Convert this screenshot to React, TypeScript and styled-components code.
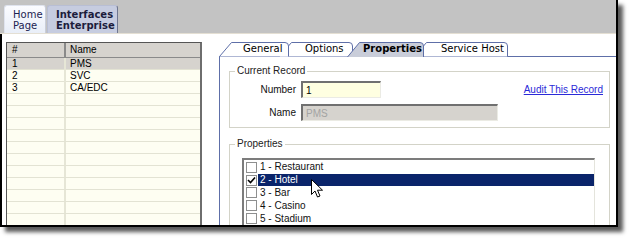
import styled, { createGlobalStyle } from 'styled-components';

const GlobalStyle = createGlobalStyle`
    html, body {
        margin: 0;
        padding: 0;
        background: #ffffff;
        font-family: "Liberation Sans", Arial, sans-serif;
    }
    * {
        box-sizing: border-box;
    }
`;

const Page = styled.div`
    position: relative;
    width: 632px;
    height: 241px;
    overflow: hidden;
`;

const Window = styled.div`
    width: 618px;
    height: 227px;
    display: flex;
    flex-direction: column;
    background: #ffffff;
    border-right: 2px solid #000;
    border-bottom: 2px solid #000;
    box-shadow: 5px 5px 4px rgba(0, 0, 0, 0.65);
    overflow: hidden;
`;

const Header = styled.div`
    height: 34px;
    flex: none;
    display: flex;
    align-items: flex-end;
    padding-left: 4px;
    gap: 1px;
    background: #c3c3c3;
    border-bottom: 1px solid #e4dfd3;
`;

const HeaderTab = styled.div<{ active?: boolean }>`
    height: 28px;
    padding: 0 0 0 8px;
    width: ${p => (p.active ? 71 : 42)}px;
    display: flex;
    flex-direction: column;
    justify-content: center;
    font-family: "DejaVu Sans", Verdana, sans-serif;
    font-size: 10px;
    line-height: 11px;
    font-weight: ${p => (p.active ? 700 : 400)};
    color: ${p => (p.active ? '#1c1c3c' : '#1c2452')};
    background: ${p => (p.active ? '#c6cce0' : 'linear-gradient(#fbfcff, #e9eef8)')};
    border-top: 1px solid ${p => (p.active ? '#b8bed4' : '#dfe3ee')};
    border-left: 1px solid ${p => (p.active ? '#b8bed4' : '#dfe3ee')};
    border-right: 1px solid ${p => (p.active ? '#6f7690' : '#c8cdda')};
    border-radius: 3px 3px 0 0;
`;

const Body = styled.div`
    flex: 1;
    min-height: 0;
    display: flex;
    border-left: 2px solid #000;
    padding: 8px 0 0 4px;
`;

const Grid = styled.div`
    width: 196px;
    flex: none;
    display: flex;
    flex-direction: column;
    background: #fefef2;
    border-left: 1px solid #555;
    border-top: 1px solid #555;
    border-right: 2px solid #6e6e6e;
`;

const GridRow = styled.div<{ head?: boolean; selected?: boolean }>`
    display: grid;
    grid-template-columns: 59px 1fr;
    flex: none;
    height: ${p => (p.head ? 15 : 12)}px;
    font-size: 10px;
    line-height: ${p => (p.head ? 14 : 12)}px;
    color: #000;
    background: ${p => (p.head || p.selected ? '#d6d3ce' : '#fefef2')};
    border-bottom: 1px solid ${p => (p.head ? '#8a8a8a' : '#e3e3d3')};
`;

const GridCell = styled.div<{ first?: boolean; head?: boolean }>`
    padding-left: ${p => (p.first ? 5 : 4)}px;
    white-space: nowrap;
    border-right: ${p => (p.first ? (p.head ? '2px solid #8a8a8a' : '2px solid #e6e6d6') : 'none')};
`;

const Right = styled.div`
    flex: 1;
    min-width: 0;
    margin-left: 17px;
    display: flex;
    flex-direction: column;
`;

const TabStrip = styled.div`
    height: 14px;
    flex: none;
    display: flex;
    position: relative;
    z-index: 2;
`;

const Tab = styled.div<{ w: number; shift: number; pad: number; layer: number; selected?: boolean }>`
    position: relative;
    flex: none;
    width: ${p => p.w}px;
    height: ${p => (p.selected ? 15 : 14)}px;
    margin-left: ${p => p.shift}px;
    padding-left: ${p => p.pad}px;
    z-index: ${p => p.layer};
    font-family: "DejaVu Sans", Tahoma, sans-serif;
    font-size: 10px;
    line-height: 14px;
    font-weight: ${p => (p.selected ? 700 : 400)};
    color: #000;

    svg {
        position: absolute;
        left: 0;
        top: 0;
        z-index: -1;
    }
`;

const TabLabel = styled.span`
    position: relative;
    white-space: nowrap;
`;

const Panel = styled.div`
    flex: 1;
    background: #ffffff;
    border-top: 1px solid #5e6fa8;
    border-left: 1px solid #5e6fa8;
    padding: 8px 6px 0 9px;
`;

const Group = styled.fieldset<{ gapTop?: number }>`
    margin: ${p => p.gapTop ?? 0}px 0 0 0;
    padding: 0;
    border: 1px solid #d3d3c8;
    min-width: 0;
`;

const Legend = styled.legend`
    margin-left: 5px;
    padding: 0 2px;
    font-size: 10px;
    line-height: 12px;
    color: #222;
`;

const FieldRow = styled.div<{ top: number }>`
    display: flex;
    align-items: center;
    height: 17px;
    margin-top: ${p => p.top}px;
`;

const FieldLabel = styled.span`
    width: 66px;
    margin-right: 5px;
    text-align: right;
    font-size: 10px;
    color: #111;
`;

const Input = styled.div<{ w: number; disabled?: boolean }>`
    width: ${p => p.w}px;
    height: 17px;
    padding: 1px 0 0 3px;
    font-size: 10px;
    line-height: 13px;
    color: ${p => (p.disabled ? '#a3a3a3' : '#000')};
    background: ${p => (p.disabled ? '#d6d3ce' : '#ffffe1')};
    border-top: 2px solid #707070;
    border-left: 2px solid #707070;
    border-right: 1px solid #ebebe4;
    border-bottom: 1px solid #ebebe4;
`;

const AuditLink = styled.a`
    margin-left: auto;
    margin-right: 6px;
    font-size: 10px;
    color: #2a2ad8;
    text-decoration: underline;
    cursor: pointer;
`;

const Spacer = styled.div<{ h: number }>`
    height: ${p => p.h}px;
`;

const CheckList = styled.div`
    margin: 8px 14px 0 12px;
    padding-top: 1px;
    height: 80px;
    background: #ffffff;
    border-top: 2px solid #7c7c7c;
    border-left: 2px solid #7c7c7c;
    border-right: 1px solid #e4e4dc;
`;

const CheckItem = styled.div`
    display: flex;
    align-items: center;
    height: 12.8px;
    padding-left: 2px;
    font-size: 10px;
`;

const Box = styled.span`
    width: 11px;
    height: 11px;
    flex: none;
    display: flex;
    align-items: center;
    justify-content: center;
    background: #ffffff;
    border: 1px solid #8e8f8f;
`;

const ItemText = styled.span<{ selected?: boolean }>`
    flex: 1;
    height: 12px;
    margin-left: 1px;
    padding-left: 2px;
    line-height: 12px;
    color: ${p => (p.selected ? '#ffffff' : '#111')};
    background: ${p => (p.selected ? '#0a246a' : 'transparent')};
`;

const Cursor = styled.svg`
    position: absolute;
    left: 311px;
    top: 179px;
`;

const rows = [
    { id: '1', name: 'PMS' },
    { id: '2', name: 'SVC' },
    { id: '3', name: 'CA/EDC' },
];

const tabs = [
    { label: 'General', w: 70, shift: 0, pad: 24, layer: 4 },
    { label: 'Options', w: 74, shift: -10, pad: 26, layer: 3 },
    { label: 'Properties', w: 77, shift: -6, pad: 16, layer: 10, selected: true },
    { label: 'Service Host', w: 94, shift: -10, pad: 27, layer: 1 },
];

const items = ['1 - Restaurant', '2 - Hotel', '3 - Bar', '4 - Casino', '5 - Stadium'];

function TabShape({ w, selected }: { w: number; selected?: boolean }) {
    const h = selected ? 15 : 14.5;
    return (
        <svg width={w} height={15} viewBox={`0 0 ${w} 15`}>
            <path
                d={`M0.5,${h} L12.5,0.5 L${w - 4},0.5 Q${w - 0.5},0.5 ${w - 0.5},4 L${w - 0.5},${h}`}
                fill={selected ? '#c9cdd9' : '#ffffff'}
                stroke="#5e6fa8"
                strokeWidth={1}
            />
        </svg>
    );
}

export default function App() {
    return (
        <Page>
            <GlobalStyle />
            <Window>
                <Header>
                    <HeaderTab>
                        <span>Home</span>
                        <span>Page</span>
                    </HeaderTab>
                    <HeaderTab active>
                        <span>Interfaces</span>
                        <span>Enterprise</span>
                    </HeaderTab>
                </Header>
                <Body>
                    <Grid>
                        <GridRow head>
                            <GridCell first head>#</GridCell>
                            <GridCell>Name</GridCell>
                        </GridRow>
                        {rows.map((r, i) => (
                            <GridRow key={r.id} selected={i === 0}>
                                <GridCell first>{r.id}</GridCell>
                                <GridCell>{r.name}</GridCell>
                            </GridRow>
                        ))}
                        {Array.from({ length: 12 }).map((_, i) => (
                            <GridRow key={'e' + i}>
                                <GridCell first />
                                <GridCell />
                            </GridRow>
                        ))}
                    </Grid>
                    <Right>
                        <TabStrip>
                            {tabs.map(t => (
                                <Tab key={t.label} w={t.w} shift={t.shift} pad={t.pad} layer={t.layer} selected={t.selected}>
                                    <TabShape w={t.w} selected={t.selected} />
                                    <TabLabel>{t.label}</TabLabel>
                                </Tab>
                            ))}
                        </TabStrip>
                        <Panel>
                            <Group>
                                <Legend>Current Record</Legend>
                                <FieldRow top={4}>
                                    <FieldLabel>Number</FieldLabel>
                                    <Input w={80}>1</Input>
                                    <AuditLink>Audit This Record</AuditLink>
                                </FieldRow>
                                <FieldRow top={6}>
                                    <FieldLabel>Name</FieldLabel>
                                    <Input w={197} disabled>PMS</Input>
                                </FieldRow>
                                <Spacer h={6} />
                            </Group>
                            <Group gapTop={10}>
                                <Legend>Properties</Legend>
                                <CheckList>
                                    {items.map((it, i) => (
                                        <CheckItem key={it}>
                                            <Box>
                                                {i === 1 && (
                                                    <svg width="9" height="9" viewBox="0 0 9 9">
                                                        <path d="M1,4 L3.5,6.5 L8,1.5" fill="none" stroke="#000" strokeWidth="1.6" />
                                                    </svg>
                                                )}
                                            </Box>
                                            <ItemText selected={i === 1}>{it}</ItemText>
                                        </CheckItem>
                                    ))}
                                </CheckList>
                            </Group>
                        </Panel>
                    </Right>
                </Body>
            </Window>
            <Cursor width="13" height="20" viewBox="0 0 13 20">
                <path d="M0.5,0.5 L0.5,15.5 L4,12 L6.5,18 L9,17 L6.5,11.2 L11.5,11.2 Z" fill="#ffffff" stroke="#000" strokeWidth="1" />
            </Cursor>
        </Page>
    );
}
